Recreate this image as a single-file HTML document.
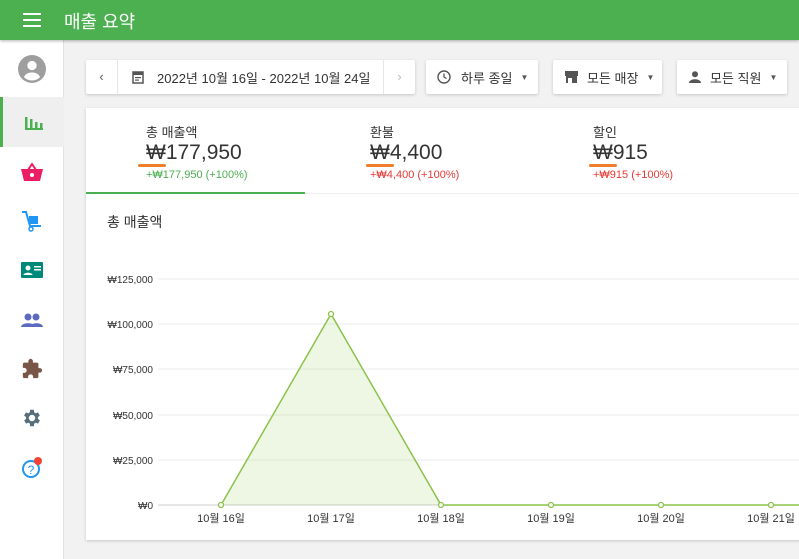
<!DOCTYPE html>
<html><head><meta charset="utf-8"><style>
*{box-sizing:border-box;margin:0;padding:0}
body{width:799px;height:559px;overflow:hidden;background:#f2f2f2;font-family:"Liberation Sans","Noto Sans CJK KR",sans-serif;position:relative}
.hdr{position:absolute;left:0;top:0;width:799px;height:40px;background:#4caf50;box-shadow:0 1px 3px rgba(0,0,0,.3);color:#fff;z-index:2}
.hdr .t{position:absolute;left:64px;top:8px;font-size:18px}
.side{position:absolute;left:0;top:40px;width:64px;height:519px;background:#fff;border-right:1px solid #e0e0e0}
.ic{position:absolute;left:0;width:64px;height:48px;display:flex;align-items:center;justify-content:center}
.btn{position:absolute;top:60px;height:34px;background:#fff;border-radius:2px;box-shadow:0 1px 3px rgba(0,0,0,.18);font-size:13px;color:#333;display:flex;align-items:center;white-space:nowrap}
.card{position:absolute;left:86px;top:108px;width:720px;height:432px;background:#fff;box-shadow:0 1px 3px rgba(0,0,0,.18)}
.tab{position:absolute;top:0;height:86px;width:200px;white-space:nowrap}
.lbl{font-size:13px;color:#333;position:absolute;top:14px}
.val{font-size:21px;color:#333;position:absolute;top:33px}
.dl{font-size:11px;position:absolute;top:61px;white-space:nowrap}
.ul{position:absolute;top:56px;width:28px;height:3px;border-radius:2px;background:#f07d2b}
</style></head><body>
<div class="hdr">
<svg style="position:absolute;left:23px;top:13px" width="18" height="14"><rect y="0" width="18" height="2" fill="#fff"/><rect y="6" width="18" height="2" fill="#fff"/><rect y="12" width="18" height="2" fill="#fff"/></svg>
<div class="t">매출 요약</div></div>
<div class="side">
<div class="ic" style="top:5px"><svg width="28" height="28" viewBox="0 0 24 24"><circle cx="12" cy="12" r="12" fill="#9e9e9e"/><circle cx="12" cy="9" r="4" fill="#fff"/><path d="M5 19c1.5-3 4-4 7-4s5.5 1 7 4a10 10 0 0 1-14 0z" fill="#fff"/></svg></div>
<div class="ic" style="top:57px;height:50px;background:#efefef;border-left:3px solid #4caf50"><svg width="20" height="18"><rect x="1" y="4" width="2.5" height="13" fill="#4caf50"/><rect x="1" y="15" width="18" height="2" fill="#4caf50"/><rect x="6" y="6" width="2.5" height="10" fill="#4caf50"/><rect x="11" y="9" width="2.5" height="7" fill="#4caf50"/><rect x="16" y="10" width="2.5" height="6" fill="#4caf50"/></svg></div>
<div class="ic" style="top:108px"><svg width="22" height="18"><path d="M7 7l4-6 4 6" stroke="#e91e63" stroke-width="2" fill="none"/><path d="M0 6h22l-3 12H3z" fill="#e91e63"/><circle cx="11" cy="12" r="2" fill="#fff"/></svg></div>
<div class="ic" style="top:157px"><svg width="22" height="22"><path d="M1 2h4l4 14h11" stroke="#2196f3" stroke-width="2" fill="none"/><rect x="8" y="6" width="9" height="8" fill="#2196f3"/><circle cx="10" cy="19" r="2" stroke="#2196f3" fill="none" stroke-width="1.5"/></svg></div>
<div class="ic" style="top:206px"><svg width="22" height="16"><rect width="22" height="16" rx="1" fill="#00897b"/><circle cx="7" cy="6" r="2.5" fill="#fff"/><path d="M2.5 13c0-3 9-3 9 0z" fill="#fff"/><rect x="13" y="4" width="7" height="1.5" fill="#fff"/><rect x="13" y="7" width="7" height="1.5" fill="#fff"/></svg></div>
<div class="ic" style="top:256px"><svg width="22" height="14"><circle cx="7" cy="4" r="3.5" fill="#5c6bc0"/><circle cx="15" cy="4" r="3.5" fill="#5c6bc0"/><path d="M0 14c0-5 14-5 14 0z M9 14c0-5 13-5 13 0z" fill="#5c6bc0"/></svg></div>
<div class="ic" style="top:305px"><svg width="22" height="22" viewBox="0 0 24 24"><path d="M20.5 11H19V7a2 2 0 0 0-2-2h-4V3.5a2.5 2.5 0 0 0-5 0V5H4a2 2 0 0 0-2 2v3.8h1.5a2.7 2.7 0 0 1 0 5.4H2V20a2 2 0 0 0 2 2h3.8v-1.5a2.7 2.7 0 0 1 5.4 0V22H17a2 2 0 0 0 2-2v-4h1.5a2.5 2.5 0 0 0 0-5z" fill="#795548"/></svg></div>
<div class="ic" style="top:354px"><svg width="22" height="22" viewBox="0 0 24 24"><path d="M19.4 13a7.5 7.5 0 0 0 0-2l2.1-1.6-2-3.5-2.5 1a7 7 0 0 0-1.7-1L15 3h-4l-.4 2.9a7 7 0 0 0-1.7 1l-2.5-1-2 3.5L6.6 11a7.5 7.5 0 0 0 0 2l-2.1 1.6 2 3.5 2.5-1a7 7 0 0 0 1.7 1L11 21h4l.4-2.9a7 7 0 0 0 1.7-1l2.5 1 2-3.5zM13 15.5a3.5 3.5 0 1 1 0-7 3.5 3.5 0 0 1 0 7z" fill="#546e7a" transform="translate(-1 0)"/></svg></div>
<div class="ic" style="top:404px"><svg width="24" height="24"><circle cx="11" cy="13" r="8" stroke="#2196f3" stroke-width="2" fill="none"/><text x="11" y="18" font-size="12" text-anchor="middle" fill="#2196f3" font-family="Liberation Sans">?</text><circle cx="18" cy="5" r="4" fill="#f44336"/></svg></div>
</div>

<div class="btn" style="left:86px;width:329px">
<div style="width:32px;height:34px;border-right:1px solid #e6e6e6;text-align:center;line-height:34px;color:#555">‹</div>
<svg style="margin-left:14px" width="12" height="14"><rect x="1" y="2" width="10" height="11" stroke="#555" stroke-width="1.5" fill="none"/><rect x="1" y="2" width="10" height="3" fill="#555"/><rect x="3" y="7" width="6" height="1.2" fill="#555"/><rect x="3" y="9.5" width="4" height="1.2" fill="#555"/></svg>
<span style="margin-left:13px">2022년 10월 16일 - 2022년 10월 24일</span>
<div style="position:absolute;right:0;width:32px;height:34px;border-left:1px solid #e6e6e6;text-align:center;line-height:34px;color:#bbb">›</div></div>
<div class="btn" style="left:426px;width:112px"><svg style="margin-left:11px" width="14" height="14"><circle cx="7" cy="7" r="6" stroke="#555" stroke-width="1.4" fill="none"/><path d="M7 3.5V7l2.5 1.5" stroke="#555" stroke-width="1.3" fill="none"/></svg><span style="margin-left:10px">하루 종일</span><span style="margin-left:8px;font-size:8px;color:#555">▼</span></div>
<div class="btn" style="left:553px;width:109px"><svg style="margin-left:12px" width="13" height="12"><rect x="0" y="0" width="13" height="5" fill="#555"/><rect x="1" y="5" width="11" height="7" fill="#555"/><rect x="3" y="7" width="4" height="5" fill="#fff"/></svg><span style="margin-left:9px">모든 매장</span><span style="margin-left:8px;font-size:8px;color:#555">▼</span></div>
<div class="btn" style="left:677px;width:110px"><svg style="margin-left:12px" width="12" height="12"><circle cx="6" cy="3.3" r="3" fill="#555"/><path d="M0 12c0-5 12-5 12 0z" fill="#555"/></svg><span style="margin-left:9px">모든 직원</span><span style="margin-left:8px;font-size:8px;color:#555">▼</span></div>

<div class="card">
<div style="position:absolute;left:0;top:85px;width:720px;height:1px;background:#eee"></div>
<div style="position:absolute;left:0;top:84px;width:219px;height:2px;background:#4caf50"></div>
<div class="tab" style="left:60px"><div class="lbl">총 매출액</div><div class="val">₩177,950</div><div class="ul" style="left:-8px"></div><div class="dl" style="color:#4caf50">+₩177,950 (+100%)</div></div>
<div class="tab" style="left:284px"><div class="lbl">환불</div><div class="val">₩4,400</div><div class="ul" style="left:-4px"></div><div class="dl" style="color:#e53935">+₩4,400 (+100%)</div></div>
<div class="tab" style="left:507px"><div class="lbl">할인</div><div class="val">₩915</div><div class="ul" style="left:-4px"></div><div class="dl" style="color:#e53935">+₩915 (+100%)</div></div>
<div style="position:absolute;left:21px;top:104px;font-size:14px;color:#333">총 매출액</div>
<svg style="position:absolute;left:0;top:0" width="720" height="432">
<g stroke="#ebebeb" stroke-width="1">
<line x1="72" y1="171" x2="720" y2="171"/><line x1="72" y1="216" x2="720" y2="216"/><line x1="72" y1="261" x2="720" y2="261"/><line x1="72" y1="307" x2="720" y2="307"/><line x1="72" y1="352" x2="720" y2="352"/><line x1="72" y1="397" x2="720" y2="397" stroke="#ccc"/></g>
<g font-size="10" fill="#333" text-anchor="end" font-family="Liberation Sans">
<text x="67" y="175">₩125,000</text><text x="67" y="220">₩100,000</text><text x="67" y="265">₩75,000</text><text x="67" y="311">₩50,000</text><text x="67" y="356">₩25,000</text><text x="67" y="401">₩0</text></g>
<g font-size="11" fill="#333" text-anchor="middle" font-family="Liberation Sans,Noto Sans CJK KR">
<text x="135" y="414">10월 16일</text><text x="245" y="414">10월 17일</text><text x="355" y="414">10월 18일</text><text x="465" y="414">10월 19일</text><text x="575" y="414">10월 20일</text><text x="685" y="414">10월 21일</text></g>
<path d="M135 397L245 206L355 397Z" fill="#8bc34a" fill-opacity=".15"/>
<path d="M135 397L245 206L355 397H720" stroke="#8bc34a" stroke-width="1.5" fill="none"/>
<g fill="#fff" stroke="#8bc34a" stroke-width="1.3"><circle cx="135" cy="397" r="2.5"/><circle cx="245" cy="206" r="2.5"/><circle cx="355" cy="397" r="2.5"/><circle cx="465" cy="397" r="2.5"/><circle cx="575" cy="397" r="2.5"/><circle cx="685" cy="397" r="2.5"/></g>
</svg>
</div>
</body></html>
